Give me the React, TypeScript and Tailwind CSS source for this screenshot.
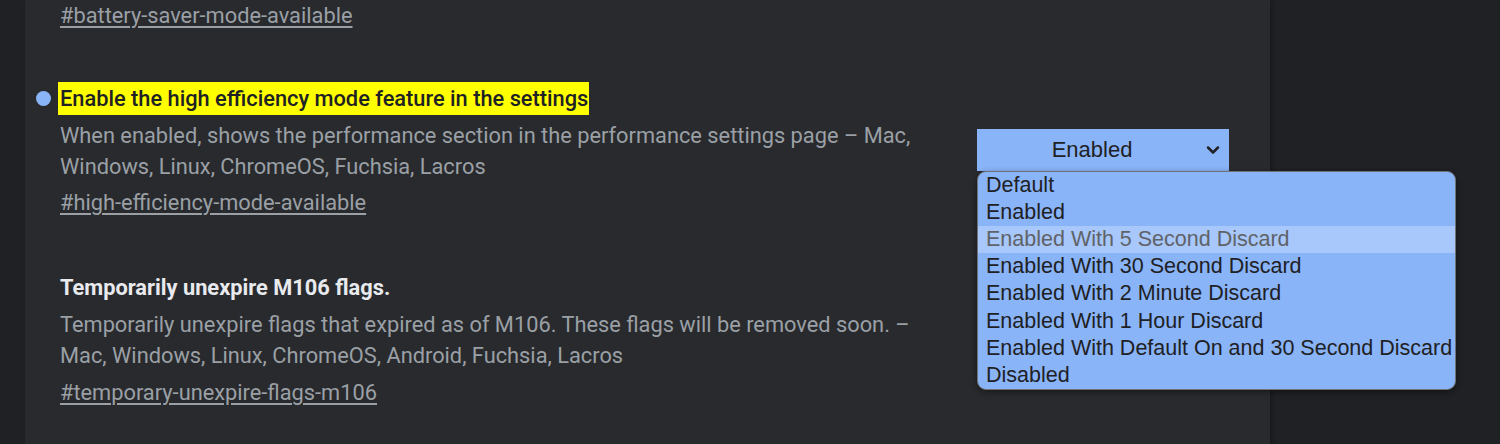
import { ChevronDown } from "lucide-react";

const options = [
  "Default",
  "Enabled",
  "Enabled With 5 Second Discard",
  "Enabled With 30 Second Discard",
  "Enabled With 2 Minute Discard",
  "Enabled With 1 Hour Discard",
  "Enabled With Default On and 30 Second Discard",
  "Disabled",
];

const linkClass = "block w-fit text-[21.8px] leading-[31px] text-[#9aa0a6] underline underline-offset-[3px]";
const descClass = "text-[21.8px] leading-[31px] text-[#9aa0a6]";

export default function App() {
  return (
    <div
      className="flex h-[444px] w-[1500px] overflow-hidden bg-[#202124]"
      style={{ fontFamily: "Roboto, 'Noto Sans', sans-serif" }}
    >
      <div className="w-[25px] shrink-0" />
      <div className="relative w-[1245px] shrink-0 bg-[#292a2d] pl-[35px] pr-[41px] shadow-[2px_0_4px_rgba(0,0,0,0.25)]">
        <a className={linkClass}>#battery-saver-mode-available</a>

        <div className="mt-[51px] flex items-center justify-between">
          <div className="w-[880px]">
            <div className="relative">
              <span className="absolute left-[-24px] top-[9px] h-[15px] w-[15px] rounded-full bg-[#8ab4f8]" />
              <h2 className="ml-[-2px] w-fit bg-[#ffff00] pl-[2px] pr-[1px] text-[21.8px] font-medium leading-[33px] text-[#202124]">
                Enable the high efficiency mode feature in the settings
              </h2>
            </div>
            <p className={`mt-[5px] ${descClass}`}>
              When enabled, shows the performance section in the performance settings page – Mac,
              <br />
              Windows, Linux, ChromeOS, Fuchsia, Lacros
            </p>
            <a className={`mt-[5px] ${linkClass}`}>#high-efficiency-mode-available</a>
          </div>

          <div className="relative mb-[1px]">
            <div
              className="flex h-[42px] w-[252px] items-center bg-[#8ab4f8] text-[22px] text-[#202124]"
              style={{ fontFamily: "'Liberation Sans', Arial, sans-serif" }}
            >
              <span className="flex-1 pl-[4px] text-center">Enabled</span>
              <ChevronDown className="mr-[6px] h-[20px] w-[20px]" strokeWidth={3} />
            </div>
            <ul
              className="absolute left-0 top-[42px] z-10 w-[479px] overflow-hidden rounded-[9px] border border-[#6f7378] bg-[#8ab4f8] text-[21.5px] leading-[27.2px] text-[#202124] shadow-[0_2px_6px_rgba(0,0,0,0.45)]"
              style={{ fontFamily: "'Liberation Sans', Arial, sans-serif" }}
            >
              {options.map((option, index) => (
                <li
                  key={option}
                  className={
                    index === 2
                      ? "bg-[#a8c7fa] pl-[8px] text-[#5f6368]"
                      : "pl-[8px]"
                  }
                >
                  {option}
                </li>
              ))}
            </ul>
          </div>
        </div>

        <div className="mt-[53px] w-[880px]">
          <h2 className="text-[21.8px] font-bold leading-[33px] text-[#e8eaed]">Temporarily unexpire M106 flags.</h2>
          <p className={`mt-[5px] ${descClass}`}>
            Temporarily unexpire flags that expired as of M106. These flags will be removed soon. –
            <br />
            Mac, Windows, Linux, ChromeOS, Android, Fuchsia, Lacros
          </p>
          <a className={`mt-[6px] ${linkClass}`}>#temporary-unexpire-flags-m106</a>
        </div>
      </div>
      <div className="flex-1" />
    </div>
  );
}
